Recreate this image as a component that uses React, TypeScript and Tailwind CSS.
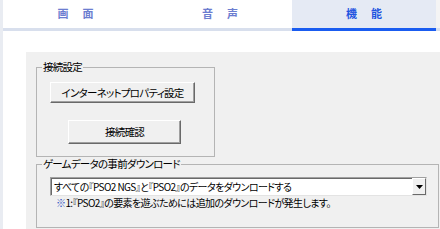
import React from "react";

const jp = "font-['Noto_Sans_CJK_JP','Noto_Sans',sans-serif] [font-feature-settings:'palt']";
const txt = "text-[10.5px] tracking-[-0.07em] whitespace-nowrap";
const txt2 = "text-[10px] tracking-[-0.06em] whitespace-nowrap";

function Tab({ label, active, w }: { label: string; active?: boolean; w: string }) {
  return (
    <div
      className={`${w} h-[31px] flex items-start justify-center pt-[6px] text-[11px] leading-[15px] border-b-[3px] ${
        active
          ? "bg-[#e5eaf4] border-[#1a5cf0] text-[#1f55e0] font-bold"
          : "bg-white border-[#d8dfed] text-[#6c7dd0] font-bold"
      }`}
    >
      <span className="flex gap-[14px]">
        <span>{label[0]}</span>
        <span>{label[1]}</span>
      </span>
    </div>
  );
}

function Btn({ children, cls }: { children: React.ReactNode; cls: string }) {
  return (
    <div
      className={`${cls} flex items-center justify-center bg-[#f0f0f0] text-black border border-t-white border-l-white border-r-[#696969] border-b-[#696969] shadow-[inset_-1px_-1px_0_#a0a0a0] ${txt}`}
    >
      {children}
    </div>
  );
}

function Group({ title, cls, children }: { title: string; cls: string; children: React.ReactNode }) {
  return (
    <div className={`relative shrink-0 border border-[#b4b4b4] flex flex-col ${cls}`}>
      <span className={`absolute left-[5px] top-[-8px] px-[1px] bg-[#f0f0f0] leading-[14px] ${txt}`}>{title}</span>
      {children}
    </div>
  );
}

export default function App() {
  return (
    <div className={`w-[440px] h-[229px] flex overflow-hidden bg-white ${jp}`}>
      <div className="w-[3px] bg-[#e9ecf2]" />
      <div className="flex-1 flex flex-col">
        <div className="flex">
          <Tab label="画面" w="w-[145px]" />
          <Tab label="音声" w="w-[144px]" />
          <Tab label="機能" w="w-[144px]" active />
          <div className="flex-1 h-[31px] bg-[#f4f4f4] border-b-[3px] border-[#d8dfed]" />
        </div>
        <div className="flex-1 pt-[21px] pl-[23px] flex">
          <div className="flex-1 bg-[#f0f0f0] pt-[15px] pl-[10px] flex flex-col text-black">
            <Group title="接続設定" cls="w-[179px] h-[90px]">
              <div className="pl-[13px] pt-[14px]">
                <Btn cls="w-[145px] h-[21px]">インターネットプロパティ設定</Btn>
              </div>
              <div className="pl-[31px] pt-[17px]">
                <Btn cls="w-[113px] h-[24px]">接続確認</Btn>
              </div>
            </Group>
            <Group title="ゲームデータの事前ダウンロード" cls="mt-[7px] w-[403px] h-[64px]">
              <div className="pl-[13px] pt-[12px]">
                <div className="w-[377px] h-[19px] flex bg-white border-t border-l border-[#a0a0a0] border-r border-b border-r-[#e3e3e3] border-b-[#e3e3e3] shadow-[inset_1px_1px_0_#696969]">
                  <div className={`flex-1 pl-[3px] pt-[1px] leading-[16px] ${txt2}`}>
                    すべての『PSO2 NGS』と『PSO2』のデータをダウンロードする
                  </div>
                  <div className="w-[14px] h-[17px] bg-[#f0f0f0] flex items-center justify-center border border-t-white border-l-white border-r-[#696969] border-b-[#696969]">
                    <svg width="7" height="4" viewBox="0 0 7 4">
                      <path d="M0 0H7L3.5 4Z" fill="#000" />
                    </svg>
                  </div>
                </div>
              </div>
              <div className={`pl-[19px] pt-[1px] leading-[12px] ${txt2}`}>
                <span className="text-[#3050c0]">※</span>1:『PSO2』の要素を遊ぶためには追加のダウンロードが発生します。
              </div>
            </Group>
          </div>
        </div>
      </div>
    </div>
  );
}
